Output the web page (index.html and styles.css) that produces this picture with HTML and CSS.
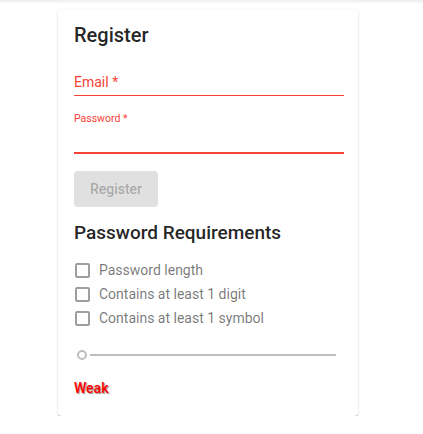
FILE: index.html
```html
<!DOCTYPE html>
<html>
<head>
<meta charset="utf-8">
<link rel="stylesheet" href="styles.css">
</head>
<body>
<div class="topbar"></div>
<div class="card">
  <h2 class="title">Register</h2>
  <div class="field field-email">
    <span class="label">Email *</span>
  </div>
  <div class="field field-password">
    <span class="label label-small">Password *</span>
  </div>
  <button class="btn" disabled>Register</button>
  <h3 class="subtitle">Password Requirements</h3>
  <ul class="reqs">
    <li class="req"><span class="box"></span>Password length</li>
    <li class="req"><span class="box"></span>Contains at least 1 digit</li>
    <li class="req"><span class="box"></span>Contains at least 1 symbol</li>
  </ul>
  <div class="slider">
    <span class="thumb"></span>
    <span class="track"></span>
  </div>
  <div class="strength">Weak</div>
</div>
</body>
</html>
```
FILE: styles.css
```css
html, body {
  margin: 0;
  padding: 0;
  background: #fff;
  font-family: Roboto, "Noto Sans", sans-serif;
}
.topbar {
  height: 3px;
  background: linear-gradient(#ededed, #fafafa);
}
.card {
  margin: 6px 0 0 58px;
  width: 300px;
  box-sizing: border-box;
  padding: 14px 14px 18px 16px;
  border-radius: 4px;
  background: #fff;
  box-shadow: 0 2px 1px -1px rgba(0,0,0,.2), 0 1px 1px 0 rgba(0,0,0,.14), 0 1px 3px 0 rgba(0,0,0,.12);
}
.title {
  margin: 0;
  font-size: 20px;
  line-height: 24px;
  font-weight: 500;
  color: rgba(0,0,0,.87);
}
.field {
  display: block;
}
.field-email {
  margin-top: 27px;
  padding-bottom: 5px;
  border-bottom: 1px solid #f44336;
}
.label {
  display: block;
  color: #f44336;
  font-size: 14px;
  line-height: 16px;
}
.field-password {
  margin-top: 16px;
  padding-bottom: 27px;
  border-bottom: 2px solid #f44336;
}
.label-small {
  font-size: 10.5px;
  line-height: 13px;
}
.btn {
  display: block;
  margin-top: 17px;
  width: 84px;
  height: 36px;
  border: 0;
  border-radius: 4px;
  background: #e0e0e0;
  color: rgba(0,0,0,.26);
  font-family: Roboto, sans-serif;
  font-size: 14px;
  font-weight: 500;
  padding: 0;
}
.subtitle {
  margin: 14px 0 0;
  font-size: 19px;
  line-height: 24px;
  font-weight: 500;
  color: rgba(0,0,0,.87);
}
.reqs {
  list-style: none;
  margin: 13px 0 0;
  padding: 0;
}
.req {
  display: flex;
  align-items: center;
  height: 24px;
  font-size: 14px;
  color: rgba(0,0,0,.54);
}
.box {
  width: 15px;
  height: 15px;
  box-sizing: border-box;
  border: 2px solid rgba(0,0,0,.38);
  border-radius: 2px;
  margin: 0 9px 0 1px;
}
.slider {
  display: flex;
  align-items: center;
  height: 20px;
  margin: 15px 8px 0 3px;
  gap: 3px;
}
.thumb {
  width: 10px;
  height: 10px;
  box-sizing: border-box;
  border: 2px solid #bdbdbd;
  border-radius: 50%;
}
.track {
  flex: 1;
  height: 2px;
  background: #bdbdbd;
}
.strength {
  margin-top: 13px;
  font-size: 14px;
  line-height: 20px;
  font-weight: 500;
  color: #ff0000;
  text-shadow: 1px 1px 1px #888;
}
```
